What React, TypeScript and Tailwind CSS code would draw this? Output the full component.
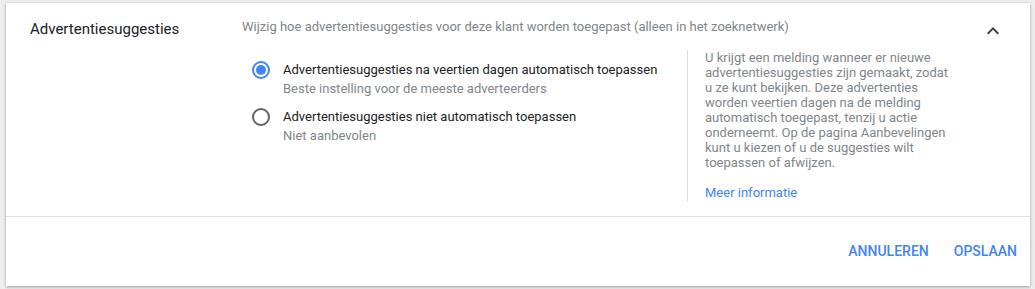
import React from "react";

export default function App() {
  return (
    <div className="w-[1035px] h-[289px] bg-[#eeeeee] pt-[3px] pl-[6px]" style={{ fontFamily: "Roboto, 'Liberation Sans', sans-serif" }}>
      <div className="w-[1024px] h-[283px] bg-white shadow-[0_1px_3px_rgba(0,0,0,0.35)] flex flex-col">
        <div className="flex h-[214px] border-b border-[#e0e0e0]">
          <div className="w-[236px] pl-[24px] pt-[16px] text-[15px] leading-[20px] text-[#202124] shrink-0">
            Advertentiesuggesties
          </div>
          <div className="flex flex-col pt-[14px] w-[715px]">
            <div className="text-[13px] leading-[20px] text-[#80868b]">
              Wijzig hoe advertentiesuggesties voor deze klant worden toegepast (alleen in het zoeknetwerk)
            </div>
            <div className="flex mt-[13px]">
              <div className="w-[445px] pl-[10px] flex flex-col gap-[9px] pt-[10px]">
                <div className="flex">
                  <div className="w-[31px] pt-[0.5px] shrink-0">
                    <div className="w-[18px] h-[18px] rounded-full border-2 border-[#4285f4] flex items-center justify-center">
                      <div className="w-[10px] h-[10px] rounded-full bg-[#4285f4]"></div>
                    </div>
                  </div>
                  <div>
                    <div className="text-[13px] leading-[19px] text-[#202124]">Advertentiesuggesties na veertien dagen automatisch toepassen</div>
                    <div className="text-[13px] leading-[19px] text-[#80868b]">Beste instelling voor de meeste adverteerders</div>
                  </div>
                </div>
                <div className="flex">
                  <div className="w-[31px] pt-[0.5px] shrink-0">
                    <div className="w-[18px] h-[18px] rounded-full border-2 border-[#5f6368]"></div>
                  </div>
                  <div>
                    <div className="text-[13px] leading-[19px] text-[#202124]">Advertentiesuggesties niet automatisch toepassen</div>
                    <div className="text-[13px] leading-[19px] text-[#80868b]">Niet aanbevolen</div>
                  </div>
                </div>
              </div>
              <div className="border-l border-[#dadce0] pl-[17px] h-[151px] w-[270px]">
                <div className="text-[13px] leading-[15px] text-[#80868b] w-[250px]">
                  U krijgt een melding wanneer er nieuwe advertentiesuggesties zijn gemaakt, zodat u ze kunt bekijken. Deze advertenties worden veertien dagen na de melding automatisch toegepast, tenzij u actie onderneemt. Op de pagina Aanbevelingen kunt u kiezen of u de suggesties wilt toepassen of afwijzen.
                </div>
                <div className="mt-[15px] text-[13px] leading-[15px] text-[#4285f4]">Meer informatie</div>
              </div>
            </div>
          </div>
          <div className="ml-auto pt-[16px] pr-[25px]">
            <svg width="24" height="24" viewBox="0 0 24 24">
              <path d="M12 8l-6 6 1.41 1.41L12 10.83l4.59 4.58L18 14z" fill="#3c4043" />
            </svg>
          </div>
        </div>
        <div className="flex-1 flex items-center justify-end pr-[13px] gap-[25px] text-[14px] font-medium text-[#4285f4]">
          <span>ANNULEREN</span>
          <span>OPSLAAN</span>
        </div>
      </div>
    </div>
  );
}
